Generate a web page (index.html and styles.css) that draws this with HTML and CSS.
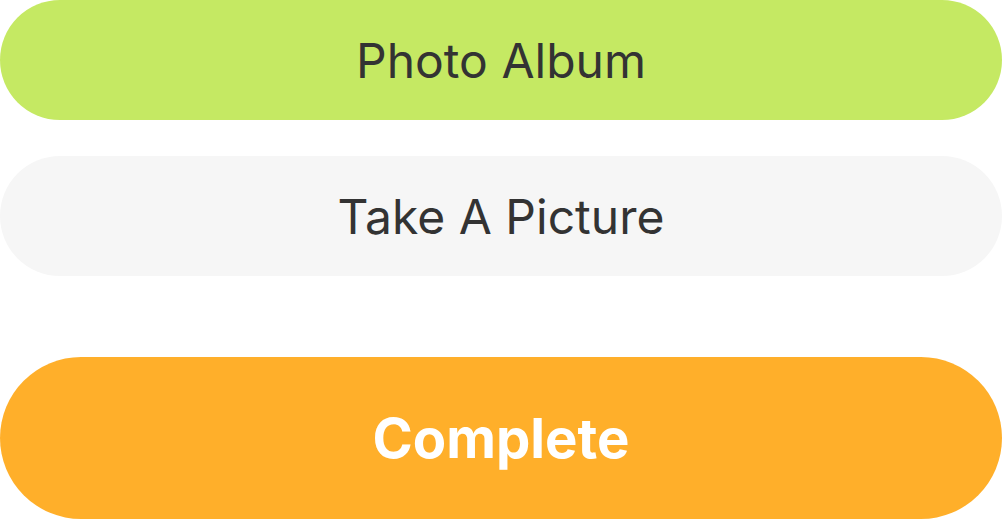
FILE: index.html
```html
<!DOCTYPE html>
<html>
<head>
<meta charset="utf-8">
<link rel="stylesheet" href="styles.css">
</head>
<body>
<div class="sheet">
  <div class="btn btn-album">Photo Album</div>
  <div class="btn btn-camera">Take A Picture</div>
  <div class="btn btn-complete">Complete</div>
</div>
</body>
</html>
```
FILE: styles.css
```css
html, body {
  margin: 0;
  padding: 0;
  background: #ffffff;
}
.sheet {
  width: 1002px;
  height: 519px;
  display: flex;
  flex-direction: column;
  font-family: Inter, "Noto Sans", sans-serif;
}
.btn {
  display: flex;
  align-items: center;
  justify-content: center;
  width: 100%;
  color: #333333;
}
.btn-album {
  height: 120px;
  border-radius: 60px;
  background: #c5e963;
  font-size: 48px;
}
.btn-camera {
  height: 120px;
  margin-top: 36px;
  border-radius: 60px;
  background: #f6f6f6;
  font-size: 48px;
}
.btn-complete {
  height: 162px;
  margin-top: 81px;
  border-radius: 81px;
  background: #ffaf2a;
  color: #ffffff;
  font-weight: 700;
  font-size: 54.5px;
}
```
